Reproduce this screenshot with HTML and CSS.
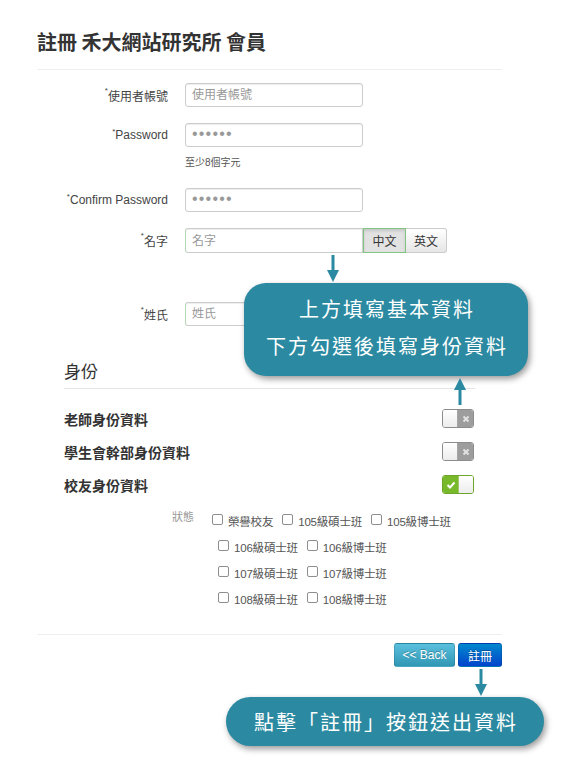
FILE: index.html
```html
<!DOCTYPE html>
<html lang="zh-Hant">
<head>
<meta charset="utf-8">
<title>註冊 禾大網站研究所 會員</title>
<link rel="stylesheet" href="styles.css">
</head>
<body>
<div class="page">
  <div class="container">
    <h1 class="title">註冊 禾大網站研究所 會員</h1>
    <div class="form">
      <div class="row r1"><label class="lbl"><span class="req">*</span>使用者帳號</label><input class="inp" placeholder="使用者帳號"></div>
      <div class="row r2"><label class="lbl"><span class="req">*</span>Password</label><input type="password" class="inp pw" placeholder="••••••"></div>
      <div class="help">至少8個字元</div>
      <div class="row r3"><label class="lbl"><span class="req">*</span>Confirm Password</label><input type="password" class="inp pw" placeholder="••••••"></div>
      <div class="row r4"><label class="lbl"><span class="req">*</span>名字</label>
        <div class="group"><input class="inp grp ok" placeholder="名字"><button class="seg active">中文</button><button class="seg last">英文</button></div>
      </div>
      <div class="row r5"><label class="lbl"><span class="req">*</span>姓氏</label><input class="inp ok" placeholder="姓氏"></div>
    </div>

    <div class="identity">
      <h2 class="sec">身份</h2>
      <div class="trow first"><span class="tlabel">老師身份資料</span>
        <span class="toggle off"><span class="knob"></span><span class="side"><svg width="8" height="8" viewBox="0 0 8 8"><path d="M1.5 1.5 L6.5 6.5 M6.5 1.5 L1.5 6.5" stroke="#e2e2e2" stroke-width="2"/></svg></span></span>
      </div>
      <div class="trow"><span class="tlabel">學生會幹部身份資料</span>
        <span class="toggle off"><span class="knob"></span><span class="side"><svg width="8" height="8" viewBox="0 0 8 8"><path d="M1.5 1.5 L6.5 6.5 M6.5 1.5 L1.5 6.5" stroke="#e2e2e2" stroke-width="2"/></svg></span></span>
      </div>
      <div class="trow"><span class="tlabel">校友身份資料</span>
        <span class="toggle on"><span class="side"><svg width="10" height="8" viewBox="0 0 10 8"><path d="M1.5 4 L4 6.5 L8.5 1.5" stroke="#fff" stroke-width="2" fill="none"/></svg></span><span class="knob"></span></span>
      </div>

      <div class="status">
        <div class="srow s1"><span class="slabel">狀態</span>
          <label class="opt"><input type="checkbox" class="cb">榮譽校友</label>
          <label class="opt"><input type="checkbox" class="cb">105級碩士班</label>
          <label class="opt"><input type="checkbox" class="cb">105級博士班</label>
        </div>
        <div class="srow sn">
          <label class="opt"><input type="checkbox" class="cb">106級碩士班</label>
          <label class="opt"><input type="checkbox" class="cb">106級博士班</label>
        </div>
        <div class="srow sn">
          <label class="opt"><input type="checkbox" class="cb">107級碩士班</label>
          <label class="opt"><input type="checkbox" class="cb">107級博士班</label>
        </div>
        <div class="srow sn">
          <label class="opt"><input type="checkbox" class="cb">108級碩士班</label>
          <label class="opt"><input type="checkbox" class="cb">108級博士班</label>
        </div>
      </div>
    </div>

    <div class="actions">
      <button class="btn info">&lt;&lt; Back</button>
      <button class="btn primary">註冊</button>
    </div>
  </div>

  <svg class="arrow a1" width="12" height="28" viewBox="0 0 12 28"><rect x="4.5" y="0" width="3" height="17" fill="#2b8aa1"/><polygon points="0,15 12,15 6,27" fill="#2b8aa1"/></svg>
  <div class="callout c1">上方填寫基本資料<br>下方勾選後填寫身份資料</div>
  <svg class="arrow a2" width="12" height="28" viewBox="0 0 12 28"><polygon points="6,1 0,13 12,13" fill="#2b8aa1"/><rect x="4.5" y="11" width="3" height="17" fill="#2b8aa1"/></svg>
  <svg class="arrow a3" width="12" height="28" viewBox="0 0 12 28"><rect x="4.5" y="0" width="3" height="17" fill="#2b8aa1"/><polygon points="0,15 12,15 6,27" fill="#2b8aa1"/></svg>
  <div class="callout c2">點擊「註冊」按鈕送出資料</div>
</div>
</body>
</html>
```

FILE: styles.css
```css
* { box-sizing: border-box; }
body {
  margin: 0;
  background: #fff;
  color: #333;
  font-family: "Liberation Sans", "Noto Sans CJK TC", sans-serif;
}
.page {
  position: relative;
  width: 566px;
  height: 758px;
  overflow: hidden;
}
.container {
  margin-left: 37px;
  width: 465px;
  padding-top: 30px;
}
.title {
  margin: 0;
  font-family: "Noto Sans CJK TC", sans-serif;
  font-size: 20px;
  line-height: 24px;
  font-weight: bold;
  color: #333;
  padding-bottom: 15px;
  border-bottom: 1px solid #eee;
}
.form { padding-top: 13px; }
.row {
  display: flex;
  align-items: center;
  height: 24px;
}
.lbl {
  width: 131px;
  margin-right: 17px;
  text-align: right;
  font-size: 12px;
  color: #444;
}
.req {
  font-size: 8px;
  vertical-align: top;
  position: relative;
  top: -1px;
}
.inp {
  width: 178px;
  height: 24px;
  border: 1px solid #ccc;
  border-radius: 3px;
  padding: 0 6px;
  font: 12px "Liberation Sans", "Noto Sans CJK TC", sans-serif;
  color: #555;
  box-shadow: inset 0 1px 1px rgba(0,0,0,.075);
  outline: none;
}
.inp::placeholder { color: #999; }
.inp.pw::placeholder { font-size: 16px; letter-spacing: 1.2px; color: #999; }
.inp.ok { border-left-color: #b5d9b5; }
.r2 { margin-top: 16px; }
.help {
  margin: 9px 0 0 148px;
  font-size: 10px;
  line-height: 14px;
  color: #555;
}
.r3 { margin-top: 18px; }
.r4 { margin-top: 16px; height: 25px; }
.r5 { margin-top: 49px; }
.group { display: flex; height: 25px; }
.inp.grp { height: 25px; border-radius: 3px 0 0 3px; }
.seg {
  height: 25px;
  border: 1px solid #ccc;
  border-left: none;
  background: linear-gradient(#fff, #e6e6e6);
  font: 12px "Noto Sans CJK TC", sans-serif;
  color: #333;
  padding: 0;
  width: 42px;
}
.seg.active {
  width: 43px;
  border: 1px solid #82c482;
  background: #e2e2e2;
  box-shadow: inset 0 2px 3px rgba(0,0,0,.12);
}
.seg.last { border-radius: 0 3px 3px 0; width: 41px; }

.identity {
  margin-left: 27px;
  width: 411px;
  margin-top: 34px;
}
.sec {
  margin: 0;
  font-family: "Noto Sans CJK TC", sans-serif;
  font-size: 17px;
  line-height: 22px;
  font-weight: normal;
  color: #333;
  padding-bottom: 6px;
  border-bottom: 1px solid #e5e5e5;
}
.trow {
  height: 33px;
  display: flex;
  align-items: center;
  justify-content: space-between;
}
.trow.first { margin-top: 13px; }
.tlabel {
  font-family: "Noto Sans CJK TC", sans-serif;
  font-size: 14px;
  font-weight: bold;
  color: #333;
}
.toggle {
  width: 32px;
  height: 19px;
  border: 1px solid #8c8c8c;
  border-radius: 3px;
  display: flex;
  overflow: hidden;
  margin-right: 1px;
}
.toggle .knob {
  width: 15px;
  background: linear-gradient(#fff, #ececec);
}
.toggle .side {
  flex: 1;
  display: flex;
  align-items: center;
  justify-content: center;
}
.toggle.off .side { background: #9d9d9d; }
.toggle.off .knob { border-right: 1px solid #a5a5a5; }
.toggle.on { border-color: #6da52a; }
.toggle.on .side { background: #78b82b; }
.toggle.on .knob { border-left: 1px solid #9ec86a; }

.status { margin-top: 7px; }
.srow {
  height: 26px;
  display: flex;
  align-items: center;
  font-size: 11.5px;
  color: #555;
}
.s1 { padding-left: 108px; }
.sn { padding-left: 154px; }
.slabel {
  font-size: 11px;
  color: #999;
  width: 40px;
  position: relative;
  top: -5px;
}
.opt {
  display: flex;
  align-items: center;
  margin-right: 9px;
  font-family: "Liberation Sans", "Noto Sans CJK TC", sans-serif;
  letter-spacing: -0.2px;
}
.cb {
  appearance: none;
  -webkit-appearance: none;
  width: 11px;
  height: 11px;
  margin: 0 5px 0 0;
  border: 1px solid #8e8e8e;
  border-radius: 2px;
  background: #fff;
  position: relative;
  top: -2px;
}

.actions {
  margin-top: 22px;
  border-top: 1px solid #eee;
  padding-top: 8px;
  display: flex;
  justify-content: flex-end;
  gap: 3px;
}
.btn {
  height: 24px;
  border: 1px solid rgba(0,0,0,.12);
  border-radius: 3px;
  color: #fff;
  font: 12px "Liberation Sans", "Noto Sans CJK TC", sans-serif;
  text-shadow: 0 -1px 0 rgba(0,0,0,.25);
  padding: 0;
}
.btn.info { width: 61px; background: linear-gradient(#5bc0de, #2f96b4); }
.btn.primary { width: 44px; background: linear-gradient(#0088cc, #0044cc); }

.arrow { position: absolute; }
.a1 { left: 327px; top: 255px; }
.a2 { left: 454px; top: 377px; }
.a3 { left: 475px; top: 669px; }
.callout {
  position: absolute;
  background: #2b8aa1;
  color: #fff;
  font-family: "Noto Sans CJK TC", sans-serif;
  font-size: 20px;
  letter-spacing: 2px;
  text-align: center;
  box-shadow: 2px 3px 6px rgba(0,0,0,.4);
}
.c1 {
  left: 244px;
  top: 283px;
  width: 284px;
  height: 93px;
  border-radius: 22px;
  padding-top: 7px;
  line-height: 37px;
  padding-left: 2px;
}
.c2 {
  left: 226px;
  top: 697px;
  width: 318px;
  height: 49px;
  border-radius: 25px;
  line-height: 49px;
  padding-left: 2px;
}
```
